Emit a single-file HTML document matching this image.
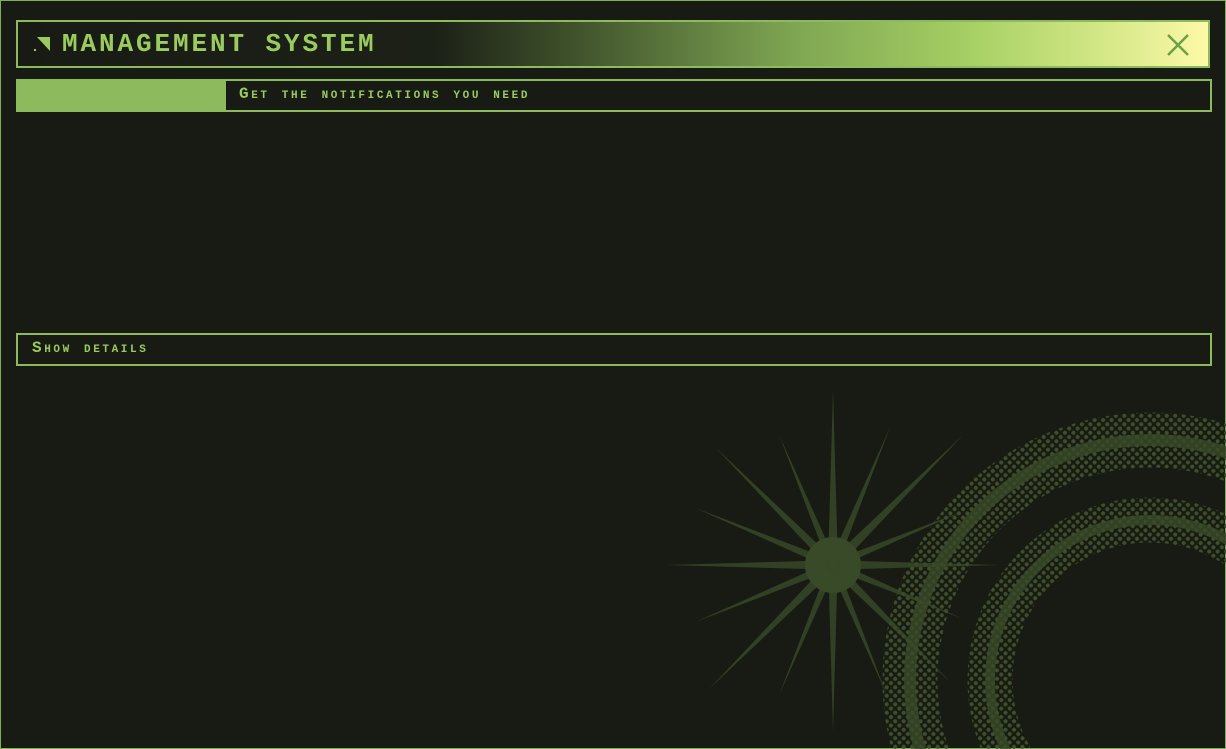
<!DOCTYPE html>
<html><head><meta charset="utf-8"><style>
html,body{margin:0;padding:0;overflow:hidden}
body{width:1226px;height:749px;background:#181b14;position:relative;overflow:hidden;font-family:"Liberation Mono","DejaVu Sans Mono",monospace}
.frame{position:absolute;left:0;top:0;width:1224px;height:747px;border:1px solid #7fae56}
.title{position:absolute;left:16px;top:20px;width:1190px;height:44px;border:2px solid #8cba5c;background:linear-gradient(90deg,#181b14 0%,#1c2117 35%,#3a4a28 45%,#7ea552 65%,#a6d064 80%,#d8e98a 92%,#fdf9a8 100%)}
.title span{position:absolute;left:44px;top:7px;font-size:26px;font-weight:bold;color:#9bcb5f;letter-spacing:2.9px}
.bar{position:absolute;left:16px;width:1196px;border:2px solid #8cba5c;box-sizing:border-box}
.txt{position:absolute;font-size:16px;font-weight:bold;color:#9bcb5f;font-variant:small-caps;letter-spacing:2.6px}
</style></head><body>
<div class="frame"></div>
<svg style="position:absolute;left:0;top:0" width="1226" height="749">
<defs>
<pattern id="dots" width="6" height="6" patternUnits="userSpaceOnUse" patternTransform="rotate(45)"><circle cx="3" cy="3" r="2" fill="#3e5029"/></pattern>
</defs>
<g fill="none" stroke="url(#dots)">
<circle cx="1150" cy="680" r="240" stroke-width="55"/>
<circle cx="1150" cy="680" r="160" stroke-width="45"/>
</g>
<g fill="none" stroke="#3a4a28">
<circle cx="1150" cy="680" r="240" stroke-width="12" opacity=".8"/>
<circle cx="1150" cy="680" r="160" stroke-width="10" opacity=".8"/>
</g>
<g transform="translate(833,565)" fill="#3a4a28">
<circle r="28"/>
<g id="ray"><polygon points="-5,0 0,-175 5,0 0,10" opacity=".8"/></g>
<use href="#ray" transform="rotate(22.5) scale(.85)"/><use href="#ray" transform="rotate(45) scale(1.05)"/><use href="#ray" transform="rotate(67.5) scale(.8)"/>
<use href="#ray" transform="rotate(90) scale(.95)"/><use href="#ray" transform="rotate(112.5) scale(.8)"/><use href="#ray" transform="rotate(135) scale(.95)"/>
<use href="#ray" transform="rotate(157.5) scale(.8)"/><use href="#ray" transform="rotate(180) scale(.95)"/><use href="#ray" transform="rotate(202.5) scale(.8)"/>
<use href="#ray" transform="rotate(225) scale(1)"/><use href="#ray" transform="rotate(247.5) scale(.85)"/><use href="#ray" transform="rotate(270) scale(.95)"/>
<use href="#ray" transform="rotate(292.5) scale(.85)"/><use href="#ray" transform="rotate(315) scale(.95)"/><use href="#ray" transform="rotate(337.5) scale(.8)"/>
</g>
</svg>
<div class="title">
<svg style="position:absolute;left:16px;top:15px" width="16" height="16"><polygon points="3,0 16,0 16,14" fill="#9bcb5f"/><rect x="0" y="12" width="2" height="2" fill="#9bcb5f"/></svg>
<span>MANAGEMENT SYSTEM</span>
<svg style="position:absolute;right:18px;top:11px" width="24" height="24"><path d="M2 2 L22 22 M22 2 L2 22" stroke="#6aa046" stroke-width="2.5"/></svg>
</div>
<div class="bar" style="top:79px;height:33px"><div style="position:absolute;left:0;top:0;width:208px;height:29px;background:#8cba5c"></div></div>
<div class="txt" style="left:239px;top:85px">Get the notifications you need</div>
<div class="bar" style="top:333px;height:33px"></div>
<div class="txt" style="left:32px;top:339px">Show details</div>
</body></html>
